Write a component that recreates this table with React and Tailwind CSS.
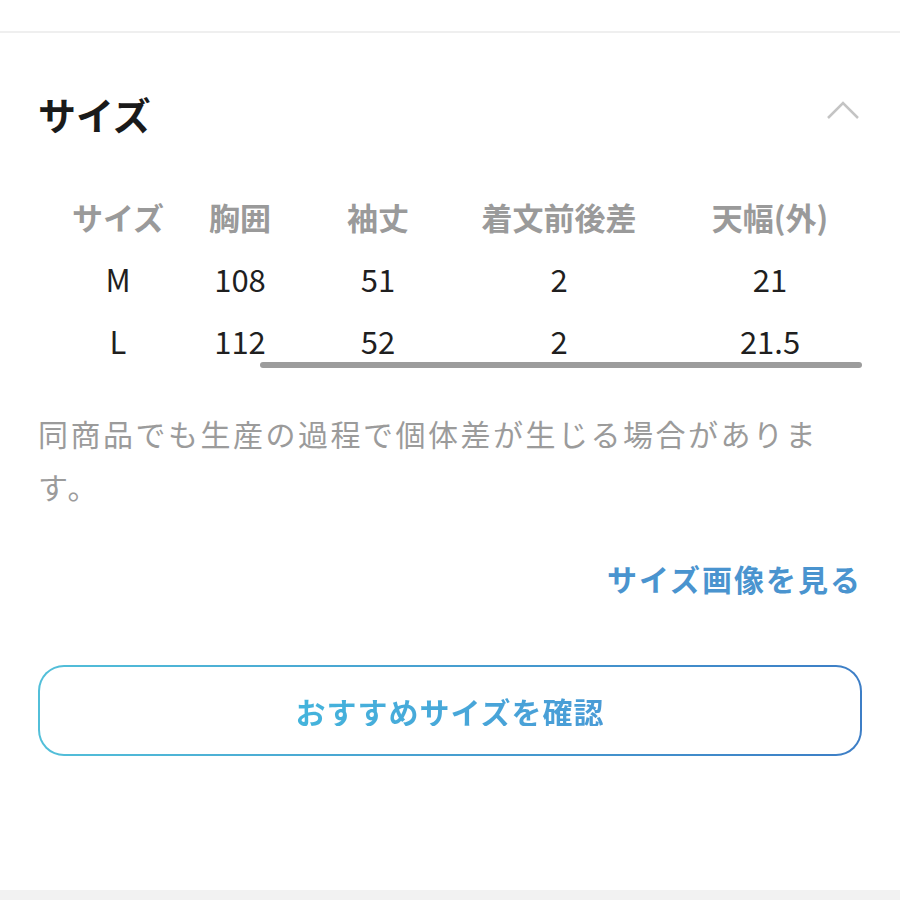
import React from 'react';

const cols = [
    { label: 'サイズ', w: 'w-[116px]' },
    { label: '胸囲', w: 'w-[128px]' },
    { label: '袖丈', w: 'w-[148px]' },
    { label: '着文前後差', w: 'w-[214px]' },
    { label: '天幅(外)', w: 'w-[208px]' },
];

const rows = [
    ['M', '108', '51', '2', '21'],
    ['L', '112', '52', '2', '21.5'],
];

const App = () => {
    return (
        <div className="w-[900px] h-[900px] bg-white flex flex-col font-['Noto_Sans_CJK_JP',sans-serif]">
            <div className="h-[31px]" />
            <div className="h-[2px] bg-[#efefef]" />

            <div className="px-[38px] flex-1 flex flex-col">
                {/* heading */}
                <div className="flex items-center justify-between mt-[56px] h-[50px]">
                    <h2 className="text-[38px] font-bold text-[#1a1a1a] leading-none tracking-[0px]">サイズ</h2>
                    <svg width="34" height="20" viewBox="0 0 34 20" className="mr-[2px] -mt-[8px]">
                        <path d="M2 18 L17 3 L32 18" fill="none" stroke="#c4c4c4" strokeWidth="2.5" />
                    </svg>
                </div>

                {/* table */}
                <div className="mt-[46px] ml-[22px] overflow-hidden w-[802px]">
                    <div className="flex h-[62px] items-center">
                        {cols.map((c, i) => (
                            <div key={i} className={`${c.w} shrink-0 text-center text-[31px] font-bold text-[#9a9a9a] leading-none`}>
                                {c.label}
                            </div>
                        ))}
                    </div>
                    {rows.map((r, ri) => (
                        <div key={ri} className="flex h-[62px] items-center">
                            {r.map((v, i) => (
                                <div key={i} className={`${cols[i].w} shrink-0 text-center text-[31px] text-[#1f1f1f] leading-none`}>
                                    {v}
                                </div>
                            ))}
                        </div>
                    ))}
                </div>
                <div className="ml-[222px] mt-[-9px] h-[6px] w-[602px] rounded-full bg-[#9c9c9c]" />

                {/* note */}
                <p className="mt-[39px] max-w-[800px] text-[30px] leading-[53px] text-[#9b9b9b] tracking-[2.5px]">
                    同商品でも生産の過程で個体差が生じる場合があります。
                </p>

                {/* link */}
                <div className="flex justify-end mt-[50px]">
                    <a className="text-[30px] font-bold text-[#4a94cf] leading-none tracking-[2px]">サイズ画像を見る</a>
                </div>

                {/* button */}
                <div className="mt-[72px] rounded-[26px] p-[2px] bg-gradient-to-r from-[#52bfd9] to-[#3d7ec6]">
                    <div className="h-[87px] rounded-[24px] bg-white flex items-center justify-center">
                        <span className="text-[30px] font-bold leading-none tracking-[1px] bg-gradient-to-r from-[#44b4dc] to-[#4a9bd6] bg-clip-text text-transparent">
                            おすすめサイズを確認
                        </span>
                    </div>
                </div>
            </div>

            <div className="h-[10px] bg-[#f2f2f2]" />
        </div>
    );
};

export default App;
